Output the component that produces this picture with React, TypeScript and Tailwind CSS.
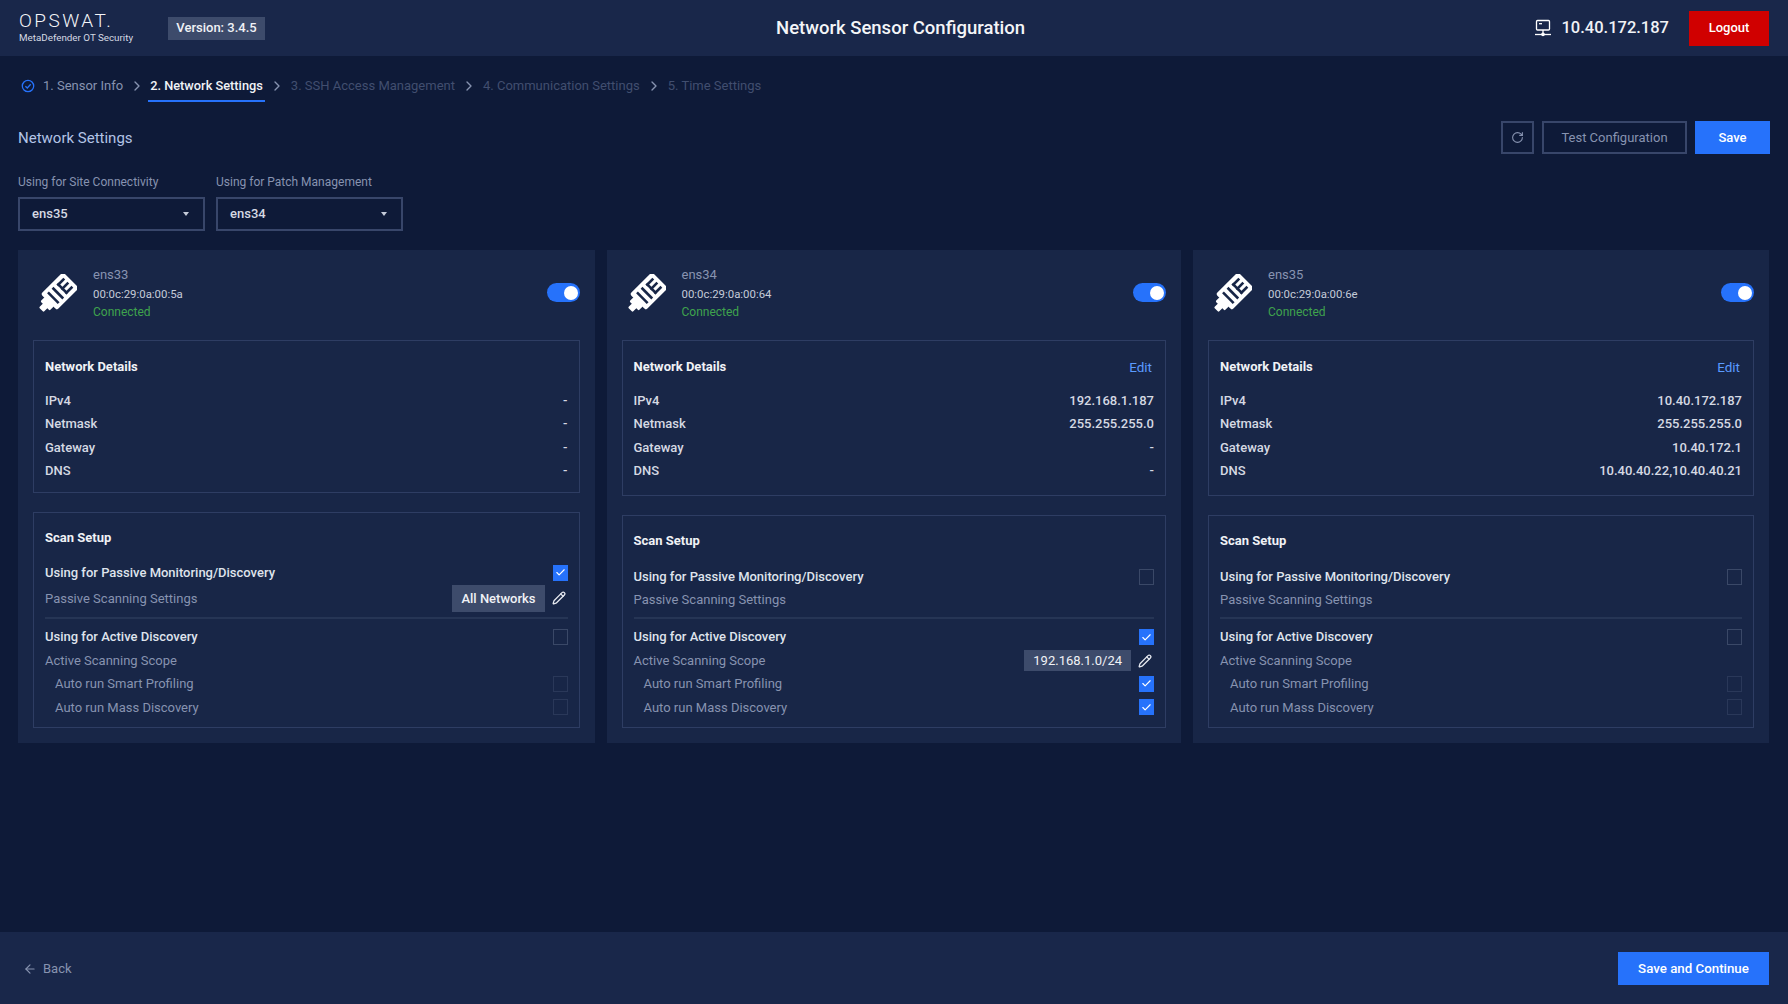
import { ArrowLeft, ChevronRight, Check, Pencil, RotateCw } from 'lucide-react';

const nics = [
  {
    name: 'ens33',
    mac: '00:0c:29:0a:00:5a',
    editable: false,
    details: ['-', '-', '-', '-'],
    passive: true,
    active: false,
    smart: false,
    mass: false,
    badge: 'All Networks',
    scope: '',
  },
  {
    name: 'ens34',
    mac: '00:0c:29:0a:00:64',
    editable: true,
    details: ['192.168.1.187', '255.255.255.0', '-', '-'],
    passive: false,
    active: true,
    smart: true,
    mass: true,
    badge: '',
    scope: '192.168.1.0/24',
  },
  {
    name: 'ens35',
    mac: '00:0c:29:0a:00:6e',
    editable: true,
    details: ['10.40.172.187', '255.255.255.0', '10.40.172.1', '10.40.40.22,10.40.40.21'],
    passive: false,
    active: false,
    smart: false,
    mass: false,
    badge: '',
    scope: '',
  },
];

const detailLabels = ['IPv4', 'Netmask', 'Gateway', 'DNS'];

function PlugIcon() {
  return (
    <svg width="41" height="41" viewBox="-19 -19 38 38" className="mt-[2px] shrink-0">
      <g transform="rotate(45)">
        <rect x="-3" y="14" width="6" height="6" rx="1" fill="#ffffff" />
        <rect x="-6" y="9" width="12" height="6" rx="1" fill="#ffffff" />
        <rect x="-10.5" y="-19" width="21" height="29" rx="2" fill="#ffffff" />
        <rect x="-7" y="3" width="14" height="2.4" fill="#182647" />
        <rect x="-7" y="-3" width="14" height="2.4" fill="#182647" />
        <rect x="-6.5" y="-15.5" width="2.4" height="9" fill="#182647" />
        <rect x="-1.2" y="-15.5" width="2.4" height="9" fill="#182647" />
        <rect x="4.1" y="-15.5" width="2.4" height="9" fill="#182647" />
        <rect x="-6.5" y="-9" width="13" height="2.4" fill="#182647" />
      </g>
    </svg>
  );
}

function ServerIcon() {
  return (
    <svg width="18" height="18" viewBox="0 0 18 18" fill="none" stroke="#ffffff" strokeWidth="1.3" className="shrink-0">
      <rect x="2.5" y="1.5" width="13" height="9.5" rx="1" />
      <path d="M5 4.7h3" />
      <path d="M9 11v3.5" />
      <path d="M1 15.5h16" />
      <circle cx="9" cy="15.3" r="1.2" fill="#ffffff" />
    </svg>
  );
}

function CircleCheck() {
  return (
    <svg width="14" height="14" viewBox="0 0 14 14" fill="none" stroke="#2672fb" strokeWidth="1.3" className="shrink-0">
      <circle cx="7" cy="7" r="5.7" />
      <path d="M4.4 7.2l1.9 1.8 3.4-3.7" />
    </svg>
  );
}

function Box({ checked, dim }: { checked: boolean; dim?: boolean }) {
  if (checked) {
    return (
      <span className="flex h-[16px] w-[15px] items-center justify-center bg-[#2672fb]">
        <Check size={11} strokeWidth={2.5} className="text-white" />
      </span>
    );
  }
  return <span className={`block h-[16px] w-[15px] border ${dim ? 'border-[#2a3859]' : 'border-[#3a4867]'}`} />;
}

function ScanRow({
  label,
  strong,
  indent,
  className,
  children,
}: {
  label: string;
  strong?: boolean;
  indent?: boolean;
  className?: string;
  children?: React.ReactNode;
}) {
  return (
    <div className={`flex items-center justify-between ${className ?? 'h-[23.4px]'}`}>
      <span className={`${strong ? 'font-medium text-[#dfe3ec]' : 'text-[#8793b0]'} ${indent ? 'pl-[10px]' : ''}`}>{label}</span>
      {children}
    </div>
  );
}

function Card({ nic }: { nic: (typeof nics)[number] }) {
  return (
    <div className="flex flex-col bg-[#182647] px-[15px] pb-[15px]">
      <div className="flex h-[90px] shrink-0 items-center justify-between pb-[4px] pt-[2px]">
        <div className="flex items-center gap-[16px] pl-[3px]">
          <PlugIcon />
          <div className="flex flex-col text-[12px] leading-[18.8px]">
            <span className="text-[13px] text-[#8793b0]">{nic.name}</span>
            <span className="text-[11.4px] text-[#c5cbd9]">{nic.mac}</span>
            <span className="text-[#3fa34d]">Connected</span>
          </div>
        </div>
        <div className="mb-[3px] flex h-[19px] w-[33px] items-center justify-end rounded-full bg-[#2672fb] pr-[2px]">
          <span className="h-[14px] w-[14px] rounded-full bg-white" />
        </div>
      </div>

      <div className="flex-1 border border-[#2e3d63] px-[11px] pt-[16px] text-[13px] text-[#d5d9e3]">
        <div className="flex h-[20px] items-center justify-between">
          <span className="font-bold text-[#f0f2f6]">Network Details</span>
          {nic.editable && <span className="mr-[2px] text-[13.5px] text-[#5b9bff]">Edit</span>}
        </div>
        <div className="mt-[12px]">
          {detailLabels.map((label, i) => (
            <div key={label} className="flex h-[23.4px] items-center justify-between">
              <span className="font-medium">{label}</span>
              <span className="font-medium">{nic.details[i]}</span>
            </div>
          ))}
        </div>
      </div>

      <div className="mt-[19px] border border-[#2e3d63] px-[11px] pb-[8px] pt-[15px] text-[13px]">
        <div className="flex h-[20px] items-center font-bold text-[#f0f2f6]">Scan Setup</div>
        <div className={nic.badge ? 'mt-[12.5px]' : 'mt-[14px]'}>
          <ScanRow label="Using for Passive Monitoring/Discovery" strong className={nic.badge ? 'h-[24.4px]' : 'h-[23.4px]'}>
            <Box checked={nic.passive} />
          </ScanRow>
          <ScanRow label="Passive Scanning Settings" className={nic.badge ? 'h-[27px]' : 'h-[23px]'}>
            {nic.badge && (
              <div className="flex items-center gap-[7px]">
                <span className="flex h-[27px] items-center bg-[#3d4b6b] px-[9px] font-medium text-[#f0f2f6]">{nic.badge}</span>
                <Pencil size={14} strokeWidth={2.2} className="mr-[2px] text-[#e6e9f0]" />
              </div>
            )}
          </ScanRow>
          <div className={`mb-[6px] h-[2px] bg-[#263555] ${nic.badge ? 'mt-[5.5px]' : 'mt-[6px]'}`} />
          <ScanRow label="Using for Active Discovery" strong>
            <Box checked={nic.active} />
          </ScanRow>
          <ScanRow label="Active Scanning Scope">
            {nic.scope && (
              <div className="flex items-center gap-[7px]">
                <span className="flex h-[21px] items-center bg-[#3d4b6b] px-[9px] text-[#f0f2f6]">{nic.scope}</span>
                <Pencil size={14} strokeWidth={2.2} className="mr-[2px] text-[#e6e9f0]" />
              </div>
            )}
          </ScanRow>
          <ScanRow label="Auto run Smart Profiling" indent>
            <Box checked={nic.smart} dim />
          </ScanRow>
          <ScanRow label="Auto run Mass Discovery" indent>
            <Box checked={nic.mass} dim />
          </ScanRow>
        </div>
      </div>
    </div>
  );
}

function Select({ value }: { value: string }) {
  return (
    <div className="flex h-[34px] w-[187px] items-center justify-between border-2 border-[#38466a] pl-[12px] pr-[14px] text-[13px] font-medium text-[#d5d9e3]">
      <span>{value}</span>
      <span className="h-0 w-0 border-x-[3.5px] border-t-[4px] border-x-transparent border-t-[#c5cbd9]" />
    </div>
  );
}

export default function App() {
  return (
    <div className="flex h-screen flex-col bg-[#0e1a38] font-['Roboto',sans-serif] text-white">
      {/* Top bar */}
      <header className="relative flex h-[56px] shrink-0 items-center justify-between bg-[#19274a] pl-[19px] pr-[19px]">
        <div className="flex items-center gap-[33px]">
          <div className="mb-[1px] flex w-[116px] flex-col whitespace-nowrap">
            <span className="text-[19px] font-light leading-[20px] tracking-[0.13em] text-[#f4f5f8]">OPSWAT.</span>
            <span className="text-[9.8px] leading-[13px] text-[#d5d9e3]">MetaDefender OT Security</span>
          </div>
          <span className="flex h-[23px] w-[97px] items-center justify-center bg-[#3d4b6b] text-[13px] font-medium text-[#f0f2f6]">
            Version: 3.4.5
          </span>
        </div>
        <h1 className="absolute left-[776px] top-[16px] text-[18.5px] font-medium leading-[24px] text-[#f4f5f8]">Network Sensor Configuration</h1>
        <div className="flex items-center gap-[20px]">
          <div className="flex items-center gap-[9px]">
            <ServerIcon />
            <span className="text-[16.5px] font-medium text-[#f0f2f6]">10.40.172.187</span>
          </div>
          <button className="flex h-[35px] w-[80px] items-center justify-center bg-[#d00000] text-[13px] font-medium text-white">Logout</button>
        </div>
      </header>

      {/* Main */}
      <main className="flex min-h-0 flex-1 flex-col px-[18px]">
        <nav className="flex h-[46px] items-start pt-[20px] text-[13px] text-[#414e6f]">
          <div className="ml-[3px] mr-[8px] flex h-[20px] items-center">
            <CircleCheck />
          </div>
          <span className="leading-[20px] text-[#8793b0]">1. Sensor Info</span>
          <ChevronRight size={16} strokeWidth={2} className="ml-[6px] mr-[3px] mt-[2px] text-[#8793b0]" />
          <span className="h-[26px] border-b-2 border-[#2672fb] px-[2px] text-[12.8px] font-medium leading-[20px] text-[#f0f2f6]">2. Network Settings</span>
          <ChevronRight size={16} strokeWidth={2} className="ml-[4px] mr-[6px] mt-[2px] text-[#8793b0]" />
          <span className="leading-[20px]">3. SSH Access Management</span>
          <ChevronRight size={16} strokeWidth={2} className="mx-[6px] mt-[2px] text-[#8793b0]" />
          <span className="leading-[20px]">4. Communication Settings</span>
          <ChevronRight size={16} strokeWidth={2} className="mx-[6px] mt-[2px] text-[#8793b0]" />
          <span className="leading-[20px]">5. Time Settings</span>
        </nav>

        <div className="mt-[19px] flex h-[33px] items-center justify-between">
          <h2 className="pt-[1px] text-[15px] text-[#b3c4e6]">Network Settings</h2>
          <div className="flex items-center gap-[8px]">
            <button className="flex h-[33px] w-[33px] items-center justify-center border-2 border-[#38466a] text-[#8793b0]">
              <RotateCw size={13} />
            </button>
            <button className="flex h-[33px] w-[145px] items-center justify-center border-2 border-[#38466a] text-[13px] text-[#8793b0]">
              Test Configuration
            </button>
            <button className="flex h-[33px] w-[75px] items-center justify-center bg-[#2672fb] text-[13px] font-medium text-white">Save</button>
          </div>
        </div>

        <div className="mt-[20px] flex gap-[11px]">
          <div>
            <div className="mb-[6px] text-[12px] leading-[17px] text-[#8793b0]">Using for Site Connectivity</div>
            <Select value="ens35" />
          </div>
          <div>
            <div className="mb-[6px] text-[12px] leading-[17px] text-[#8793b0]">Using for Patch Management</div>
            <Select value="ens34" />
          </div>
        </div>

        <div className="mt-[19px] grid h-[493px] grid-cols-[576.5px_574.5px_576px] gap-[12px]">
          {nics.map((nic) => (
            <Card key={nic.name} nic={nic} />
          ))}
        </div>
      </main>

      {/* Footer */}
      <footer className="flex h-[72px] shrink-0 items-center justify-between bg-[#19274a] pl-[23px] pr-[19px]">
        <div className="flex items-center gap-[6px] pt-[1px] text-[13px] text-[#8793b0]">
          <ArrowLeft size={14} />
          <span>Back</span>
        </div>
        <button className="mt-[1px] flex h-[33px] w-[151px] items-center justify-center bg-[#2672fb] text-[13.3px] font-medium text-white">
          Save and Continue
        </button>
      </footer>
    </div>
  );
}
